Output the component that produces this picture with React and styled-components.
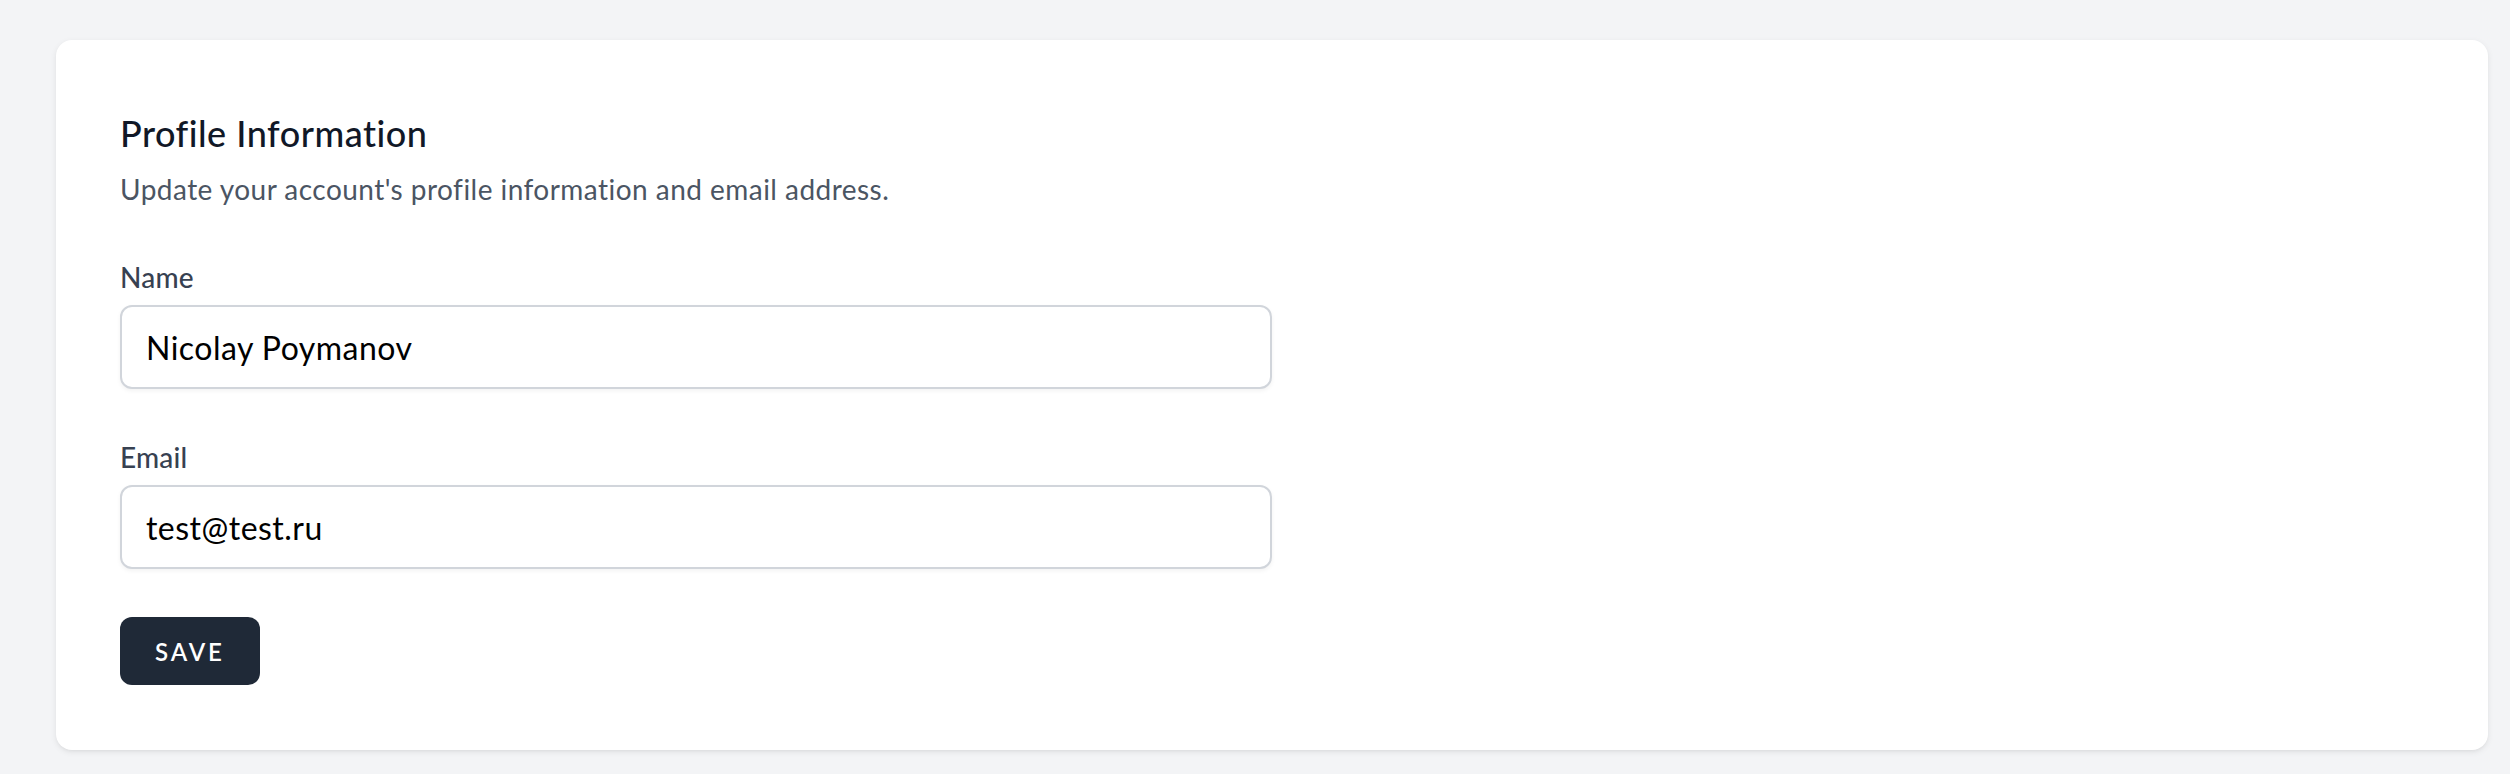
import React from "react";
import styled, { createGlobalStyle } from "styled-components";

const GlobalStyle = createGlobalStyle`
    html, body {
        margin: 0;
        padding: 0;
        background: #f3f4f6;
        font-family: "Lato", "Inter", "Noto Sans", sans-serif;
        letter-spacing: 0.012em;
    }
    * {
        box-sizing: border-box;
    }
`;

const Page = styled.div`
    min-height: 774px;
    padding: 40px 22px 26px 56px;
    background: #f3f4f6;
`;

const Card = styled.section`
    background: #ffffff;
    border-radius: 16px;
    box-shadow: 0 2px 6px rgba(0, 0, 0, 0.08), 0 2px 4px -2px rgba(0, 0, 0, 0.06);
    padding: 65px 64px 65px;
`;

const Title = styled.h2`
    margin: 0;
    font-size: 36px;
    line-height: 56px;
    font-weight: 500;
    letter-spacing: 0.014em;
    color: #111827;
`;

const Description = styled.p`
    margin: 8px 0 0;
    font-size: 28px;
    line-height: 40px;
    letter-spacing: 0.0165em;
    color: #4b5563;
`;

const Form = styled.form`
    margin-top: 48px;
    max-width: 1152px;
    display: flex;
    flex-direction: column;
    gap: 48px;
`;

const Field = styled.div`
    display: flex;
    flex-direction: column;
    gap: 8px;
`;

const Label = styled.label`
    font-size: 28px;
    line-height: 40px;
    font-weight: 500;
    color: #374151;
`;

const Input = styled.input`
    width: 100%;
    height: 84px;
    padding: 16px 24px;
    border: 2px solid #d1d5db;
    border-radius: 12px;
    box-shadow: 0 2px 4px rgba(0, 0, 0, 0.05);
    font-family: inherit;
    font-size: 32px;
    line-height: 48px;
    letter-spacing: 0.015em;
    color: #000000;
    background: #ffffff;
    outline: none;
`;

const Actions = styled.div`
    display: flex;
    align-items: center;
    gap: 32px;
`;

const Button = styled.button`
    height: 68px;
    padding: 0 33px;
    border: 2px solid transparent;
    border-radius: 12px;
    background: #1f2937;
    color: #ffffff;
    font-family: inherit;
    font-size: 24px;
    font-weight: 600;
    letter-spacing: 0.12em;
    text-transform: uppercase;
    cursor: pointer;
`;

export default function App() {
    return (
        <>
            <GlobalStyle />
            <Page>
                <Card>
                    <header>
                        <Title>Profile Information</Title>
                        <Description>
                            Update your account's profile information and email address.
                        </Description>
                    </header>
                    <Form onSubmit={e => e.preventDefault()}>
                        <Field>
                            <Label htmlFor="name">Name</Label>
                            <Input id="name" type="text" defaultValue="Nicolay Poymanov" />
                        </Field>
                        <Field>
                            <Label htmlFor="email">Email</Label>
                            <Input id="email" type="email" defaultValue="test@test.ru" />
                        </Field>
                        <Actions>
                            <Button type="submit">Save</Button>
                        </Actions>
                    </Form>
                </Card>
            </Page>
        </>
    );
}
